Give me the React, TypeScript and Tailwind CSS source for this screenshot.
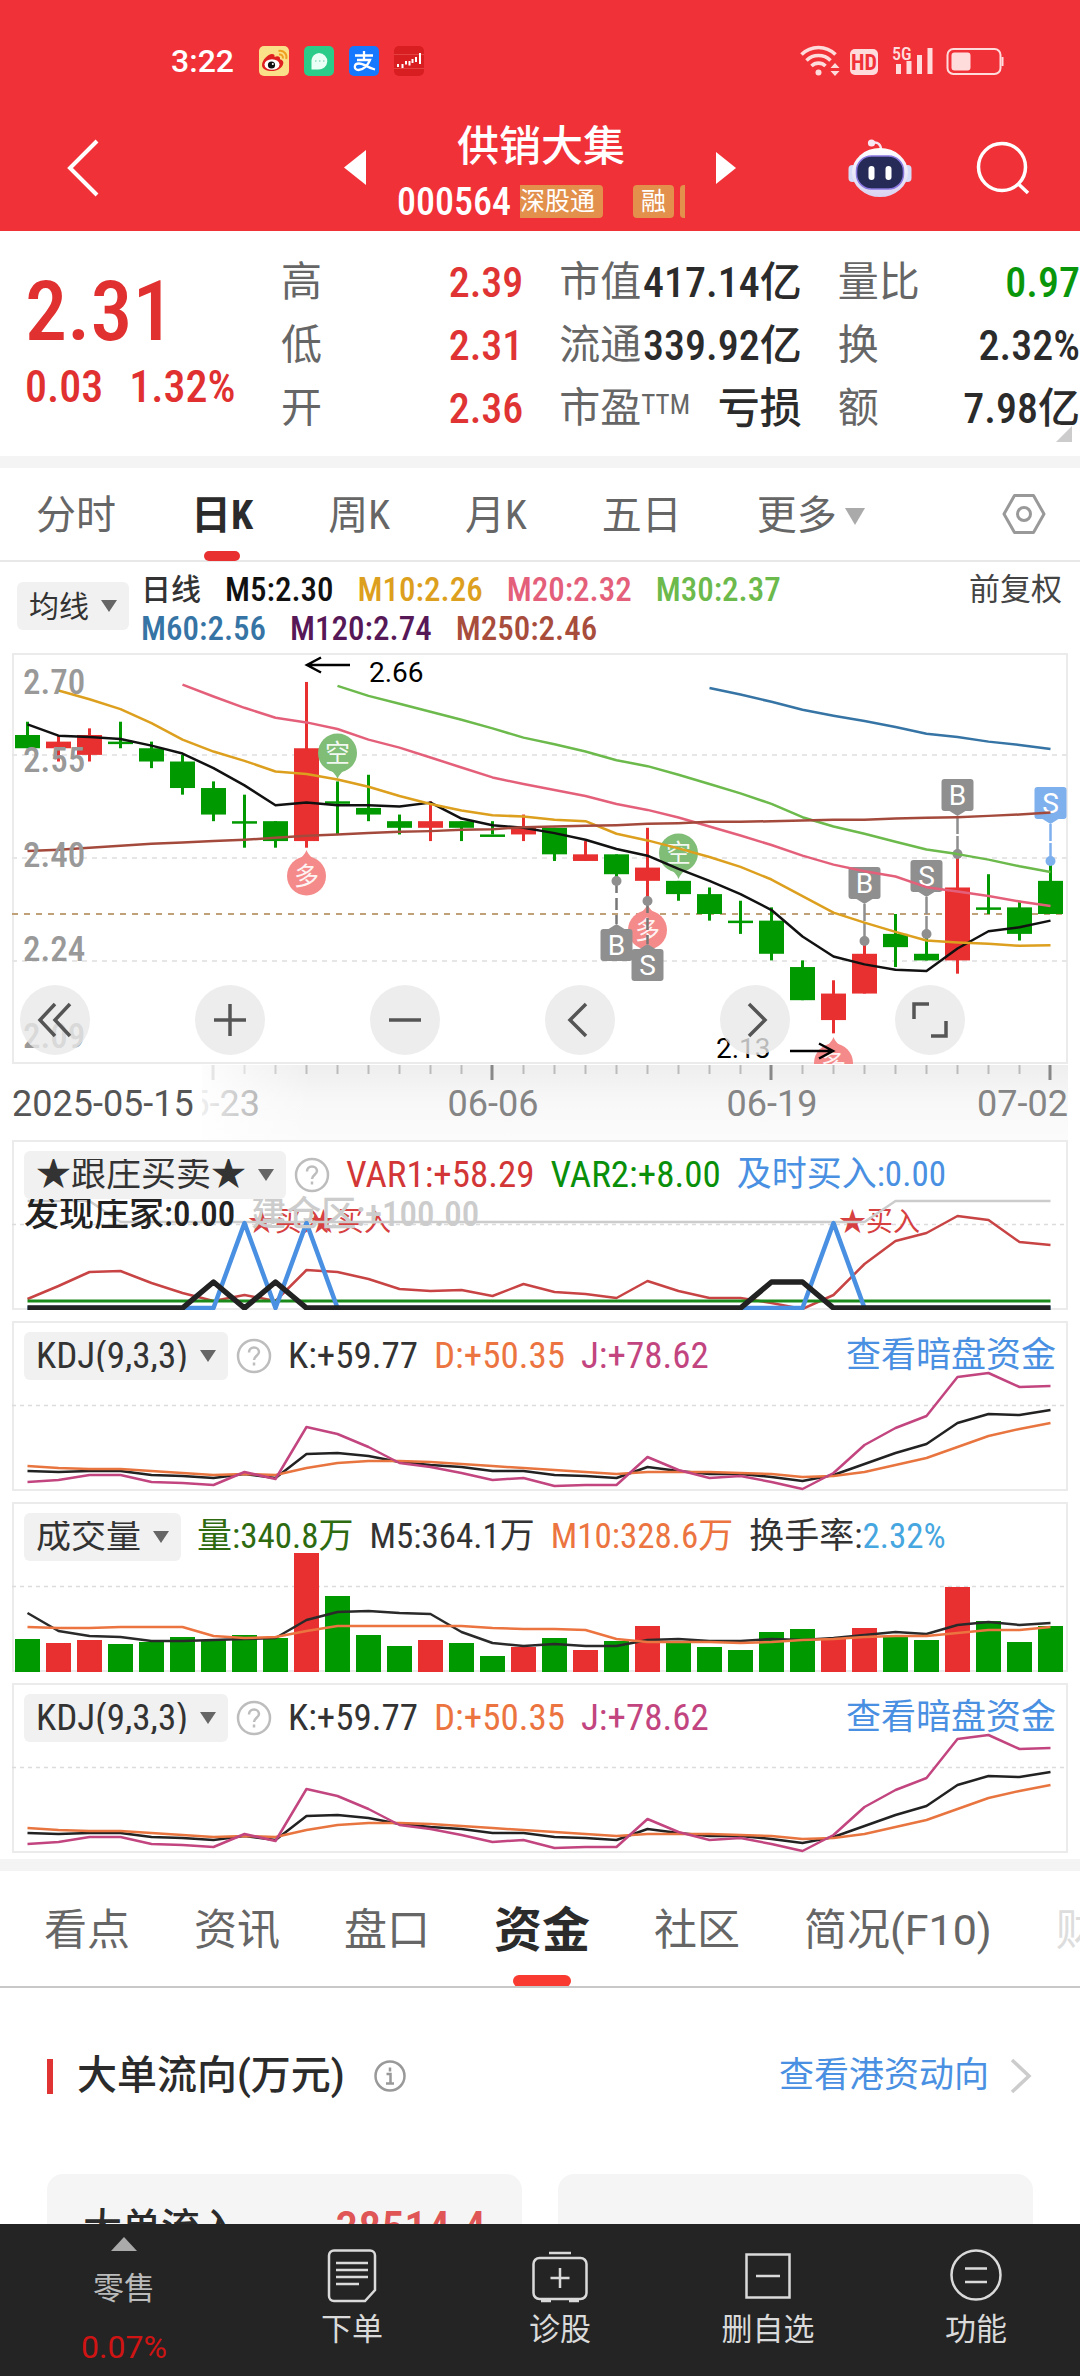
import type { ReactNode } from 'react';

type Candle = { open: number; close: number; high: number; low: number };

const GREEN = '#009900';
const RED   = '#e93030';

// ─── Data ────────────────────────────────────────────────────────────────────

// [open, close, high, low]
const DAILY: [number, number, number, number][] = [
  [2.58, 2.56, 2.60, 2.56], [2.56, 2.57, 2.58, 2.54], [2.55, 2.58, 2.59, 2.54], [2.57, 2.57, 2.60, 2.56],
  [2.56, 2.54, 2.57, 2.53], [2.54, 2.50, 2.55, 2.49], [2.50, 2.46, 2.51, 2.45], [2.45, 2.45, 2.49, 2.41],
  [2.45, 2.42, 2.45, 2.41], [2.42, 2.56, 2.66, 2.41], [2.48, 2.48, 2.51, 2.43], [2.47, 2.46, 2.52, 2.45],
  [2.45, 2.44, 2.46, 2.43], [2.44, 2.45, 2.48, 2.42], [2.45, 2.44, 2.45, 2.42], [2.43, 2.43, 2.45, 2.43],
  [2.43, 2.44, 2.46, 2.42], [2.44, 2.40, 2.44, 2.39], [2.39, 2.40, 2.42, 2.39], [2.40, 2.37, 2.40, 2.36],
  [2.36, 2.38, 2.44, 2.33], [2.36, 2.34, 2.36, 2.33], [2.34, 2.31, 2.35, 2.30], [2.30, 2.30, 2.33, 2.28],
  [2.30, 2.25, 2.32, 2.24], [2.23, 2.18, 2.24, 2.18], [2.15, 2.19, 2.21, 2.13], [2.19, 2.25, 2.27, 2.19],
  [2.28, 2.26, 2.31, 2.23], [2.25, 2.24, 2.28, 2.24], [2.24, 2.35, 2.40, 2.22], [2.32, 2.32, 2.37, 2.31],
  [2.32, 2.28, 2.33, 2.27], [2.36, 2.31, 2.39, 2.31],
];

const candles: Candle[] = DAILY.map(([open, close, high, low]) => ({ open, close, high, low }));

// Averages whose window reaches back before the first visible candle
const M5_HEAD  = [2.596, 2.579, 2.577, 2.574];
const M10_HEAD = [2.647, 2.634, 2.619, 2.598, 2.573, 2.555, 2.541, 2.525];
const M20_HEAD = [2.656, 2.638, 2.621, 2.606, 2.599, 2.589, 2.573, 2.561, 2.546, 2.531, 2.516, 2.506, 2.497, 2.488];
const M30_HEAD = [2.654, 2.639, 2.627, 2.615, 2.603, 2.59, 2.576, 2.566, 2.555, 2.542, 2.533, 2.52, 2.506, 2.492, 2.476, 2.456, 2.442, 2.431, 2.419];
const M60  = [2.651, 2.641, 2.63, 2.618, 2.609, 2.601, 2.592, 2.582, 2.577, 2.57, 2.565, 2.559];
const M250 = [
  2.405, 2.407, 2.41, 2.413, 2.416, 2.418, 2.42, 2.422, 2.425, 2.428, 2.43, 2.432, 2.434, 2.435, 2.437, 2.438, 2.441,
  2.442, 2.443, 2.444, 2.446, 2.447, 2.449, 2.449, 2.45, 2.451, 2.452, 2.452, 2.454, 2.455, 2.456, 2.458, 2.46, 2.463,
];

const VAR1 = [159, 146, 132, 131, 143, 153, 161, 155, 161, 130, 132, 139, 149, 151, 150, 156, 144, 152, 154, 158, 141, 151, 158, 158, 163, 169, 155, 124, 101, 93, 76, 80, 102, 105];

const KDJ_K = [150, 151, 150, 150, 154, 155, 157, 153, 157, 133, 132, 135, 141, 144, 146, 150, 150, 154, 155, 157, 146, 150, 153, 153, 156, 160, 154, 143, 132, 123, 102, 93, 94, 89];
const KDJ_D = [145, 147, 148, 148, 150, 152, 154, 153, 154, 147, 142, 140, 140, 141, 143, 145, 147, 149, 151, 153, 151, 151, 151, 152, 153, 156, 155, 151, 144, 137, 126, 115, 108, 102];
const KDJ_J = [161, 159, 154, 154, 161, 162, 164, 151, 158, 106, 113, 126, 142, 146, 152, 159, 157, 165, 164, 164, 136, 149, 157, 155, 161, 168, 152, 124, 107, 95, 56, 52, 66, 65];

const VOLUME = [137, 141, 138, 142, 140, 135, 138, 133, 136, 51, 94, 133, 144, 138, 141, 154, 145, 136, 148, 139, 124, 141, 145, 148, 130, 127, 137, 126, 134, 138, 85, 119, 140, 124];
const VOL_M5  = [111, 129, 134, 135, 139, 139, 138, 137, 136, 118, 110, 109, 111, 112, 130, 141, 144, 142, 144, 144, 138, 137, 139, 139, 137, 138, 136, 133, 130, 132, 123, 120, 123, 121];
const VOL_M10 = [125, 126, 126, 125, 125, 125, 134, 136, 135, 129, 124, 124, 124, 124, 124, 126, 127, 127, 128, 137, 140, 140, 140, 141, 140, 138, 137, 135, 134, 134, 131, 128, 128, 125];

// ─── Helpers ─────────────────────────────────────────────────────────────────

const cx = (i: number) => 15.5 + i * 31;
const py = (price: number) => 261 - (price - 2.31) * 663;

const points = (ys: number[], from = 0) => ys.map((y, i) => `${cx(i + from)},${y}`).join(' ');

function average(head: number[], from: number, days: number) {
  const rest: number[] = [];
  for (let i = from + head.length; i < candles.length; i++) {
    const part = candles.slice(i - days + 1, i + 1);
    rest.push(part.reduce((sum, c) => sum + c.close, 0) / days);
  }
  return points([...head, ...rest].map(py), from);
}

// flat line with peaks at some days
const peaks = (base: number, top: number, days: number[]) =>
  candles.map((_, i) => (days.includes(i) ? top : base));

// ─── Small parts ─────────────────────────────────────────────────────────────

function Line({ pts, color, width = 2.5 }: { pts: string; color: string; width?: number }) {
  return <polyline points={pts} fill="none" stroke={color} strokeWidth={width} strokeLinejoin="round" />;
}

function Picker({ label, options, className = '' }: { label: string; options: string[]; className?: string }) {
  return (
    <span className={`relative inline-flex h-12 shrink-0 items-center rounded-md bg-[#f1f1f1] ${className}`}>
      <select
        aria-label={label}
        className="h-full appearance-none bg-transparent pl-3 pr-10 text-[#333] outline-none [field-sizing:content]"
      >
        {options.map((o) => <option key={o}>{o}</option>)}
      </select>
      <svg className="pointer-events-none absolute right-3 h-3 w-4" viewBox="0 0 16 12"><path d="M0 0h16l-8 12z" fill="#666" /></svg>
    </span>
  );
}

function HelpButton() {
  return (
    <button aria-label="说明" className="shrink-0">
      <svg className="h-9 w-9" viewBox="0 0 36 36" fill="none" stroke="#bdbdbd" strokeWidth="2.500">
        <circle cx="18" cy="18" r="16" />
        <path d="M13 14.500c0-3 2-5 5-5s5 2 5 4.600c0 3.400-5 4-5 7.900" />
        <path d="M18 24.500v3" />
      </svg>
    </button>
  );
}

function Panel({ header, children }: { header: ReactNode; children: ReactNode }) {
  return (
    <div className="relative">
      <svg className="block w-full" viewBox="0 0 1056 170">
        <rect x="1" y="1" width="1054" height="168" fill="none" stroke="#ebebeb" strokeWidth="2" />
        <path d="M0 84.500H1056" stroke="#dcdcdc" strokeWidth="1.500" strokeDasharray="4 4" />
        {children}
      </svg>
      <div className="absolute inset-x-3 top-[11px] text-[35px] leading-[32px]">{header}</div>
    </div>
  );
}

function KdjPanel() {
  return (
    <Panel
      header={
        <div className="flex items-center gap-4 whitespace-nowrap text-[37px]">
          <div className="flex items-center gap-2">
            <Picker label="指标" options={['KDJ(9,3,3)', 'MACD', 'RSI']} />
            <HelpButton />
          </div>
          <span className="text-[#333]">K:+59.77</span>
          <span className="text-[#ec7440]">D:+50.35</span>
          <span className="text-[#c2457f]">J:+78.62</span>
          <a href="#dark-pool" className="ml-auto text-[35px] text-[#4a90e2]">查看暗盘资金</a>
        </div>
      }
    >
      <Line pts={points(KDJ_K)} color="#222" />
      <Line pts={points(KDJ_D)} color="#e8753f" />
      <Line pts={points(KDJ_J)} color="#c2457f" />
    </Panel>
  );
}

// ─── Candle chart ────────────────────────────────────────────────────────────

function Bubble({ x, tip, up = false, text }: { x: number; tip: number; up?: boolean; text: string }) {
  const c = up ? tip + 26 : tip - 26;
  const s = up ? -1 : 1;
  return (
    <g>
      <g fill={up ? '#f48a8a' : '#80bd76'}>
        <circle cx={x} cy={c} r="19.500" />
        <path d={`M${x - 10} ${c + 15 * s}Q${x - 2} ${c + 20 * s} ${x} ${tip}Q${x + 2} ${c + 20 * s} ${x + 10} ${c + 15 * s}z`} />
      </g>
      <text x={x} y={c + 9} textAnchor="middle" fontSize="25" fill="#fff" opacity="0.9">{text}</text>
    </g>
  );
}

function TradeTag({ x, dot, top, text, color = '#8f8f8f' }: { x: number; dot: number; top: number; text: string; color?: string }) {
  const below = top > dot;
  const edge = below ? top : top + 32;
  const tip = below ? edge - 5 : edge + 5;
  return (
    <g>
      <path d={`M${x} ${dot}V${tip}`} stroke={below ? '#777' : color} strokeWidth="2.500" strokeDasharray={below ? '12 5' : '18 2'} />
      <circle cx={x} cy={dot} r="5" fill={color} />
      <rect x={x - 16} y={top} width="32" height="32" rx="3" fill={color} />
      <path d={`M${x - 8} ${edge}L${x} ${tip}L${x + 8} ${edge}z`} fill={color} />
      <text x={x} y={top + 26} textAnchor="middle" fontSize="28" fill="#fff" className="font-[Roboto]">{text}</text>
    </g>
  );
}

function CandleChart() {
  return (
    <svg className="block w-full" viewBox="0 0 1056 487">
      <defs>
        <clipPath id="frame"><rect width="1056" height="411" /></clipPath>
        <linearGradient id="shade" x1="0" x2="0" y1="0" y2="1">
          <stop offset="0" stopColor="#eeeeee" />
          <stop offset="0.500" stopColor="#f8f8f8" />
          <stop offset="1" stopColor="#fbfbfb" />
        </linearGradient>
        <linearGradient id="fade">
          <stop offset="0" stopColor="#fff" />
          <stop offset="0.600" stopColor="#fff" stopOpacity="0.950" />
          <stop offset="1" stopColor="#fff" stopOpacity="0" />
        </linearGradient>
      </defs>

      <rect x="1" y="1" width="1054" height="409" fill="none" stroke="#ebebeb" strokeWidth="2" />
      {[102, 205, 308].map((y) => (
        <path key={y} d={`M0 ${y}H1056`} stroke="#e6e6e6" strokeWidth="2" strokeDasharray="5 5" />
      ))}
      <path d="M0 261H1056" stroke="#c0a078" strokeWidth="2" strokeDasharray="6 6" />

      <g clipPath="url(#frame)">
        {candles.map((c, i) => {
          const color = c.close > c.open ? RED : GREEN;
          const top = py(Math.max(c.open, c.close));
          const height = Math.max(Math.abs(c.open - c.close) * 663, 2.5);
          return (
            <g key={i} fill={color}>
              <rect x={cx(i) - 1.5} y={py(c.high)} width="3" height={py(c.low) - py(c.high)} />
              <rect x={cx(i) - 12.5} y={top} width="25" height={height} />
            </g>
          );
        })}

        <Bubble x={cx(10)} tip={126} text="空" />
        <Bubble x={cx(21)} tip={226} text="空" />
        <Bubble x={cx(9)}  tip={197} text="多" up />
        <Bubble x={cx(20)} tip={251} text="多" up />
        <Bubble x={cx(26)} tip={384} text="多" up />

        <TradeTag x={cx(19)} dot={228} top={276} text="B" />
        <TradeTag x={cx(20)} dot={248} top={296} text="S" />
        <TradeTag x={cx(27)} dot={288} top={214} text="B" />
        <TradeTag x={cx(29)} dot={281} top={207} text="S" />
        <TradeTag x={cx(30)} dot={201} top={126} text="B" />
        <TradeTag x={cx(33)} dot={208} top={134} text="S" color="#7fb0ee" />

        <Line pts={average(M5_HEAD, 0, 5)}    color="#111" />
        <Line pts={average(M10_HEAD, 1, 10)}  color="#dd9f1e" />
        <Line pts={average(M20_HEAD, 5, 20)}  color="#e4607a" />
        <Line pts={average(M30_HEAD, 10, 30)} color="#6cb94c" />
        <Line pts={points(M60.map(py), 22)}   color="#3574a4" />
        <Line pts={points(M250.map(py))}      color="#a44a3c" />
      </g>

      {/* Price scale */}
      <g fontSize="35" fontWeight="500" fill="#999">
        <text x="11" y="41">2.70</text>
        <text x="11" y="119">2.55</text>
        <text x="11" y="214">2.40</text>
        <text x="11" y="308">2.24</text>
        <text x="11" y="395">2.09</text>
      </g>

      {/* High and low of the range */}
      <g className="font-[Roboto]" fontSize="28" fill="#000">
        <path d="M338 12H295M309 4.500L295 12L309 19.500" fill="none" stroke="#000" strokeWidth="2.500" />
        <text x="357" y="29">2.66</text>
        <path d="M778 398H821M807 390.500L821 398L807 405.500" fill="none" stroke="#000" strokeWidth="2.500" />
        <text x="704" y="405">2.13</text>
      </g>

      {/* Date axis */}
      <rect y="412" width="1056" height="75" fill="url(#shade)" />
      {candles.map((_, i) =>
        i < 6 ? null : i % 9 === 6
          ? <rect key={i} x={cx(i) - 2} y="412" width="3" height="15" fill="#888" />
          : <rect key={i} x={cx(i) - 1} y="412" width="2" height="9" fill="#bbb" />
      )}
      <g className="font-[Roboto]" fontSize="36" fill="#858585">
        <text x="248" y="463" textAnchor="end">05-23</text>
        <text x="481" y="463" textAnchor="middle">06-06</text>
        <text x="760" y="463" textAnchor="middle">06-19</text>
        <text x="1056" y="463" textAnchor="end">07-02</text>
        <rect y="412" width="190" height="75" fill="#fff" />
        <rect x="0" y="412" width="300" height="75" fill="url(#fade)" />
        <text x="0" y="463" fill="#555">2025-05-15</text>
      </g>
    </svg>
  );
}

function ChartButton({ label, d }: { label: string; d: string }) {
  return (
    <button aria-label={label} className="flex h-[70px] w-[70px] items-center justify-center rounded-full bg-[#e8e8e8]/80">
      <svg className="h-9 w-9" viewBox="0 0 36 36" fill="none" stroke="#555" strokeWidth="3.500"><path d={d} /></svg>
    </button>
  );
}

// ─── Header ──────────────────────────────────────────────────────────────────

function StatusBar() {
  return (
    <div className="flex h-[84px] items-center justify-between pl-[171px] pr-[76px] pt-[38px]">
      <div className="flex items-center gap-[15px]">
        <span className="mr-[10px] font-[Roboto] text-[32px] font-medium leading-none">3:22</span>
        <svg className="h-[30px] w-[30px]" viewBox="0 0 30 30">
          <rect width="30" height="30" rx="5" fill="#fbe08a" />
          <path d="M3 19c0-5 6-11 10-11 2 0 3 1 2.500 3 3-1.200 6-.8 5.500 2.200 3 .8 4 2.800 3 5.300-1.500 4-6 6.500-11 6.500C7.500 25 3 23 3 19z" fill="#e02020" />
          <ellipse cx="13" cy="18.500" rx="7.500" ry="5.300" fill="#fff" />
          <circle cx="12.500" cy="19" r="3.600" fill="#111" /><circle cx="13.800" cy="18" r="1" fill="#fff" />
          <path d="M20 8.500c2.500-.5 4.500 1.500 3.800 4M19.500 5c5-1 9 3 7.700 8" fill="none" stroke="#f0a020" strokeWidth="2" />
        </svg>
        <svg className="h-[30px] w-[30px]" viewBox="0 0 30 30">
          <rect width="30" height="30" rx="5" fill="#2bcb8a" />
          <path d="M15 7a8.500 8 0 1 1-1 16.500H7.500V14A8 7.500 0 0 1 15 7z" fill="#eafff6" />
          <path d="M11 15h1.500M15 15h1.500M19 15h1.500" stroke="#8fdcc0" strokeWidth="1.500" />
        </svg>
        <svg className="h-[30px] w-[30px]" viewBox="0 0 30 30">
          <rect width="30" height="30" rx="5" fill="#1677ff" />
          <path d="M6 9.500h18M15 5v8.500M8 14h13c-2 5-6.500 10-11.500 10-5 0-5-6.500.5-6.500C15 17.500 19 22 26 23.500" fill="none" stroke="#fff" strokeWidth="2.300" />
        </svg>
        <svg className="h-[30px] w-[30px]" viewBox="0 0 30 30">
          <rect width="30" height="30" rx="5" fill="#d81e20" />
          <path d="M0 8.500h30M0 22.500h30" stroke="#e84a4a" strokeWidth="0.800" />
          <path d="M4 18v3M8.500 18v4M12 15v3.500M15.500 15v4.500M18.500 13v4M22 11v5M26 7v11" stroke="#fff" strokeWidth="2" />
        </svg>
      </div>

      <svg className="h-[32px] w-[204px]" viewBox="0 0 204 32" fill="#ffdcdc">
        <g fill="none" stroke="#ffdcdc" strokeWidth="3.600">
          <path d="M1.500 9.500a24 24 0 0 1 34 0M6.500 15.500a17 17 0 0 1 24 0M11.500 21a10 10 0 0 1 14 0" />
        </g>
        <circle cx="18.500" cy="27.500" r="3" />
        <path d="M35 18l4.500 5h-9zM35 31l4.500-5h-9z" />
        <rect x="50" y="4" width="28" height="26" rx="5" />
        <text x="64" y="25" textAnchor="middle" fontSize="22" fontWeight="700" fill="#f13138">HD</text>
        <text x="92" y="15" fontSize="18" fontWeight="500">5G</text>
        <path d="M96 19h5v10h-5zM106.500 16h5v13h-5zM117 10h5v19h-5zM127.500 3h5v26h-5z" />
        <rect x="147.500" y="4" width="53" height="25" rx="6" fill="none" stroke="#ffdcdc" strokeWidth="2" />
        <rect x="151.500" y="7.500" width="19" height="18" rx="3" />
        <path d="M202.500 12v9" stroke="#ffdcdc" strokeWidth="2" />
      </svg>
    </div>
  );
}

function StockHeader() {
  return (
    <header className="bg-[#f13138] text-white">
      <StatusBar />
      <div className="grid h-[147px] grid-cols-[1fr_auto_1fr] items-center pt-5">
        <button aria-label="返回" className="justify-self-start pl-[66px]">
          <svg className="h-[58px] w-9" viewBox="0 0 36 58" fill="none" stroke="#fff" strokeWidth="4"><path d="M31 2L4 29l27 27" /></svg>
        </button>

        <div className="flex w-[392px] items-center justify-between">
          <button aria-label="上一只">
            <svg className="h-[35px] w-[22px]" viewBox="0 0 22 35" fill="#fff"><path d="M22 0v35L0 17.500z" /></svg>
          </button>
          <div className="pt-3 text-center">
            <h1 className="text-[42px] font-medium leading-[56px]">供销大集</h1>
            <div className="flex items-center">
              <span className="mr-[9px] text-[38px] font-medium leading-[54px]">000564</span>
              <span className="flex w-[165px] overflow-hidden whitespace-nowrap text-[25px] leading-[33px]">
                <span className="shrink-0 rounded-r-sm bg-[#e2904c] pr-2">深股通</span>
                <span className="ml-[30px] shrink-0 rounded-sm bg-[#e2904c] px-2">融</span>
                <span className="ml-[6px] w-4 shrink-0 rounded-sm bg-[#e2904c]" />
              </span>
            </div>
          </div>
          <button aria-label="下一只">
            <svg className="h-8 w-5" viewBox="0 0 20 32" fill="#fff"><path d="M0 0v32l20-16z" /></svg>
          </button>
        </div>

        <div className="flex items-center justify-end gap-16 pr-[50px]">
          <button aria-label="智能助手">
            <svg className="h-[58px] w-16" viewBox="0 0 64 58">
              <defs>
                <linearGradient id="shell" x1="0" x2="0" y1="0" y2="1">
                  <stop offset="0" stopColor="#fff" /><stop offset="1" stopColor="#d9d3f2" />
                </linearGradient>
              </defs>
              <path d="M24 4c6-1.500 9 1.500 9 7" fill="none" stroke="#f6e4f2" strokeWidth="2.500" />
              <circle cx="23.500" cy="4" r="3.600" fill="#f8e8f4" />
              <rect x="0.500" y="26" width="8" height="17" rx="4" fill="#d6dcf8" /><rect x="55.500" y="26" width="8" height="17" rx="4" fill="#d6dcf8" />
              <ellipse cx="32" cy="33.500" rx="28" ry="24.500" fill="url(#shell)" />
              <rect x="8.500" y="17" width="47" height="33" rx="15" fill="#252b56" stroke="#8a78e0" strokeWidth="1.500" />
              <rect x="20.500" y="27" width="6" height="14" rx="3" fill="#fff" /><rect x="37.500" y="27" width="6" height="14" rx="3" fill="#fff" />
            </svg>
          </button>
          <button aria-label="搜索">
            <svg className="h-[54px] w-[54px]" viewBox="0 0 54 54" fill="none" stroke="#fff" strokeWidth="3.500"><circle cx="26" cy="26" r="23.500" /><path d="M42.500 43L52 52" /></svg>
          </button>
        </div>
      </div>
    </header>
  );
}

// ─── Quote ───────────────────────────────────────────────────────────────────

const QUOTE = [
  { label: '高',   value: '2.39',     color: 'text-[#e03434]' },
  { label: '市值', value: '417.14亿', color: 'text-[#2b2b2b]' },
  { label: '量比', value: '0.97',     color: 'text-[#0a960a]' },
  { label: '低',   value: '2.31',     color: 'text-[#e03434]' },
  { label: '流通', value: '339.92亿', color: 'text-[#2b2b2b]' },
  { label: '换',   value: '2.32%',    color: 'text-[#2b2b2b]' },
  { label: '开',   value: '2.36',     color: 'text-[#e03434]' },
  { label: '市盈', value: '亏损',     color: 'text-[#2b2b2b]', sup: 'TTM' },
  { label: '额',   value: '7.98亿',   color: 'text-[#2b2b2b]' },
];

function Quote() {
  return (
    <section className="relative flex pb-4 pt-5">
      <div className="w-[281px] shrink-0 pl-[25px] pt-[13px] text-[#e03030]">
        <p className="text-[84px] font-medium leading-[96px]">2.31</p>
        <p className="flex gap-[26px] text-[44px] font-medium leading-[54px]"><span>0.03</span><span>1.32%</span></p>
      </div>
      <dl className="grid flex-1 grid-cols-3 gap-x-9 whitespace-nowrap leading-[63px]">
        {QUOTE.map((q) => (
          <div key={q.label} className="flex h-[63px] justify-between">
            <dt className="text-[41px] font-normal text-[#666]">
              {q.label}
              {q.sup && <span className="relative bottom-2 align-baseline text-[27px]">{q.sup}</span>}
            </dt>
            <dd className={`text-[42px] font-medium ${q.color}`}>{q.value}</dd>
          </div>
        ))}
      </dl>
      <svg className="absolute bottom-[14px] right-2 h-4 w-4" viewBox="0 0 16 16"><path d="M16 0v16H0z" fill="#ccc" /></svg>
    </section>
  );
}

const PERIODS = ['分时', '日K', '周K', '月K', '五日'];

const LEGEND = [
  { text: '日线',      color: 'text-[#333]' },
  { text: 'M5:2.30',   color: 'text-[#111]' },
  { text: 'M10:2.26',  color: 'text-[#dd9f1e]' },
  { text: 'M20:2.32',  color: 'text-[#e4607a]' },
  { text: 'M30:2.37',  color: 'text-[#6cb94c]' },
  { text: 'M60:2.56',  color: 'text-[#3574a4]' },
  { text: 'M120:2.74', color: 'text-[#571858]' },
  { text: 'M250:2.46', color: 'text-[#a84c3c]' },
];

const TABS = ['看点', '资讯', '盘口', '资金', '社区', '简况(F10)'];

// ─── Bottom bar ──────────────────────────────────────────────────────────────

function NavItem({ label, children }: { label: string; children: ReactNode }) {
  return (
    <button className="flex flex-col items-center pt-6">
      <svg className="h-[56px] w-[56px]" viewBox="0 0 56 56" fill="none" stroke="#dadada" strokeWidth="2.500">{children}</svg>
      <span className="pt-1 leading-[44px]">{label}</span>
    </button>
  );
}

function BottomBar() {
  return (
    <nav className="fixed inset-x-0 bottom-0 grid h-[152px] grid-cols-[248fr_208fr_208fr_208fr_208fr] bg-[#242424] text-[31px] font-normal text-[#dadada]">
      <button className="flex flex-col items-center pt-[13px]">
        <svg className="h-[14px] w-[26px]" viewBox="0 0 26 14"><path d="M13 0l13 14H0z" fill="#aaa" /></svg>
        <span className="mt-4 leading-[44px] text-[#bbb]">零售</span>
        <span className="mt-[14px] font-[Roboto] text-[32px] leading-[44px] text-[#d01414]">0.07%</span>
      </button>
      <NavItem label="下单">
        <path d="M10 2.500h36a5 5 0 0 1 5 5V42L41 53H10a5 5 0 0 1-5-5V7.500a5 5 0 0 1 5-5zM12 15h32M12 22h32M12 29h32M12 36h23" />
      </NavItem>
      <NavItem label="诊股">
        <rect x="1.500" y="10" width="53" height="41" rx="6" /><path d="M17 5h22M28 20v20M18.500 30h19M9 53h10M37 53h10" />
      </NavItem>
      <NavItem label="删自选">
        <rect x="6.500" y="6.500" width="43" height="43" /><path d="M16 28h24" />
      </NavItem>
      <NavItem label="功能">
        <circle cx="28" cy="27" r="24.500" /><path d="M17 20.500h22M17 34h22" />
      </NavItem>
    </nav>
  );
}

// ─── Page ────────────────────────────────────────────────────────────────────

export default function App() {
  return (
    <div className="overflow-x-hidden bg-white pb-[60px] font-['Roboto_Condensed','Noto_Sans_CJK_SC',sans-serif]">
      <StockHeader />
      <Quote />

      {/* Period tabs */}
      <nav className="flex h-[106px] items-stretch gap-[75px] border-b-2 border-t-[12px] border-b-[#e8e8e8] border-t-[#f4f4f4] pl-9 pr-[34px] text-[40px] text-[#666]">
        {PERIODS.map((p) => (
          <button key={p} className={p === '日K' ? 'relative pt-1 font-bold text-[#2b2b2b]' : 'pt-1'}>
            {p}
            {p === '日K' && <span className="absolute -bottom-px left-1/2 h-[10px] w-9 -translate-x-1/2 rounded-full bg-[#e93030]" />}
          </button>
        ))}
        <button className="flex items-center gap-2 pt-1">
          更多
          <svg className="h-[17px] w-5" viewBox="0 0 20 17"><path d="M0 0h20L10 17z" fill="#aaa" /></svg>
        </button>
        <button aria-label="设置" className="ml-auto">
          <svg className="h-11 w-11" viewBox="0 0 44 44" fill="none" stroke="#999" strokeWidth="3"><path d="M12.500 3.500h19L42 22 31.500 40.500h-19L2 22z" strokeLinejoin="round" /><circle cx="22" cy="22" r="6.500" /></svg>
        </button>
      </nav>

      {/* Averages */}
      <div className="flex h-[91px] items-start pl-[17px] pr-[18px] pt-2">
        <Picker label="主图指标" options={['均线', '布林线']} className="mt-3 text-[30px]" />
        <ul className="ml-3 flex max-w-[680px] flex-wrap gap-x-6 text-[33px] font-medium leading-[39px]">
          {LEGEND.map((l) => (
            <li key={l.text} className={l.text === '日线' ? 'text-[30px] text-[#333]' : l.color}>{l.text}</li>
          ))}
        </ul>
        <button className="ml-auto text-[31px] leading-[39px] text-[#444]">前复权</button>
      </div>

      {/* Charts */}
      <div className="flex flex-col gap-[11px] px-3 pb-[6px]">
        <div>
          <div className="relative">
            <CandleChart />
            <div className="absolute bottom-[85px] left-2 right-[103px] flex justify-between">
              <ChartButton label="展开"   d="M18 2L3 18l15 16M33 2L18 18l15 16" />
              <ChartButton label="放大"   d="M18 2v32M2 18h32" />
              <ChartButton label="缩小"   d="M2 18h32" />
              <ChartButton label="向左"   d="M24 2L8 18l16 16" />
              <ChartButton label="向右"   d="M12 2l16 16-16 16" />
              <ChartButton label="全屏"   d="M2 17V2h15M34 19v15H19" />
            </div>
          </div>

          <Panel
            header={
              <>
                <div className="flex items-center gap-4 whitespace-nowrap text-[37px]">
                  <div className="flex items-center gap-2">
                    <Picker label="指标" options={['★跟庄买卖★', 'MACD']} className="text-[35px]" />
                    <HelpButton />
                  </div>
                  <span className="text-[#d23636]">VAR1:+58.29</span>
                  <span className="text-[#0a8f0a]">VAR2:+8.00</span>
                  <span className="text-[35px] text-[#4a90e2]">及时买入:0.00</span>
                </div>
                <div className="flex gap-4 whitespace-nowrap font-medium">
                  <span className="text-[#222]">发现庄家:0.00</span>
                  <span className="text-[#ccc]">建仓区:+100.00</span>
                </div>
              </>
            }
          >
            <g fontSize="27" fill="#d64040">
              <text x="236" y="91">★买入</text>
              <text x="298" y="91">★买入</text>
              <text x="827" y="91">★买入</text>
            </g>
            <Line pts={points(candles.map((_, i) => (i < 3 || i > 27 ? 61 : 82)))} color="#ccc" />
            <Line pts={points(VAR1)} color="#c84444" />
            <Line pts={points(peaks(161, 161, []))} color="#1a8a1a" width={3} />
            <Line pts={points(peaks(168, 83, [7, 9, 26]))} color="#4a90e2" width={4.5} />
            <Line pts={points(peaks(168, 142, [6, 8, 24, 25]))} color="#222" width={5.5} />
          </Panel>
        </div>

        <KdjPanel />

        <Panel
          header={
            <div className="flex items-center gap-4 whitespace-nowrap">
              <Picker label="指标" options={['成交量', '成交额']} />
              <span className="text-[#2d6a10]">量:340.8万</span>
              <span className="text-[#333]">M5:364.1万</span>
              <span className="text-[#ec7440]">M10:328.6万</span>
              <span className="text-[#333]">换手率:<span className="text-[#45a6e0]">2.32%</span></span>
            </div>
          }
        >
          {VOLUME.map((top, i) => (
            <rect key={i} x={cx(i) - 12.5} y={top} width="25" height={170 - top}
                  fill={candles[i].close > candles[i].open ? RED : GREEN} />
          ))}
          <Line pts={points(VOL_M5)} color="#2a2a2a" />
          <Line pts={points(VOL_M10)} color="#ec7440" />
        </Panel>

        <KdjPanel />
      </div>

      {/* Content tabs */}
      <nav className="flex h-[129px] gap-16 overflow-hidden whitespace-nowrap border-b-2 border-t-[12px] border-b-[#c8c8c8] border-t-[#f4f4f4] pl-11 font-[Roboto,'Noto_Sans_CJK_SC',sans-serif] text-[43px] text-[#666]">
        {TABS.map((t) => (
          <button key={t} className={t === '资金' ? 'relative pt-1 text-[48px] font-bold text-[#2b2b2b]' : 'pt-1'}>
            {t}
            {t === '资金' && <span className="absolute -bottom-px left-1/2 h-3 w-[58px] -translate-x-1/2 rounded-full bg-[#f93a30]" />}
          </button>
        ))}
        <button className="pt-1 text-[#ddd]">财务</button>
      </nav>

      {/* Money flow */}
      <section className="px-[47px]">
        <div className="flex h-[176px] items-center">
          <span className="h-[35px] w-[6px] bg-[#e03434]" />
          <h2 className="ml-6 font-[Roboto,'Noto_Sans_CJK_SC',sans-serif] text-[40px] font-medium text-[#2b2b2b]">大单流向(万元)</h2>
          <button aria-label="说明" className="ml-[29px]">
            <svg className="h-8 w-8" viewBox="0 0 32 32" fill="none" stroke="#999" strokeWidth="2.500">
              <circle cx="16" cy="16" r="14.500" /><path d="M16 7.500v4M12.500 14h4v9M12 23.500h8" />
            </svg>
          </button>
          <a href="#hk-flow" className="ml-auto flex items-center gap-5 text-[35px] text-[#4a90e2]">
            查看港资动向
            <svg className="h-9 w-6" viewBox="0 0 24 36" fill="none" stroke="#ccc" strokeWidth="3.500"><path d="M3 2l17 16L3 34" /></svg>
          </a>
        </div>
        <div className="grid grid-cols-2 gap-9 pt-[10px]">
          <div className="flex h-[138px] justify-between rounded-2xl bg-[#f5f5f5] px-9 pt-6 leading-[60px]">
            <span className="text-[39px] font-medium text-[#2b2b2b]">大单流入</span>
            <span className="text-[46px] font-medium text-[#e05555]">38514.4</span>
          </div>
          <div className="h-[138px] rounded-2xl bg-[#f5f5f5]" />
        </div>
      </section>

      <BottomBar />
    </div>
  );
}
